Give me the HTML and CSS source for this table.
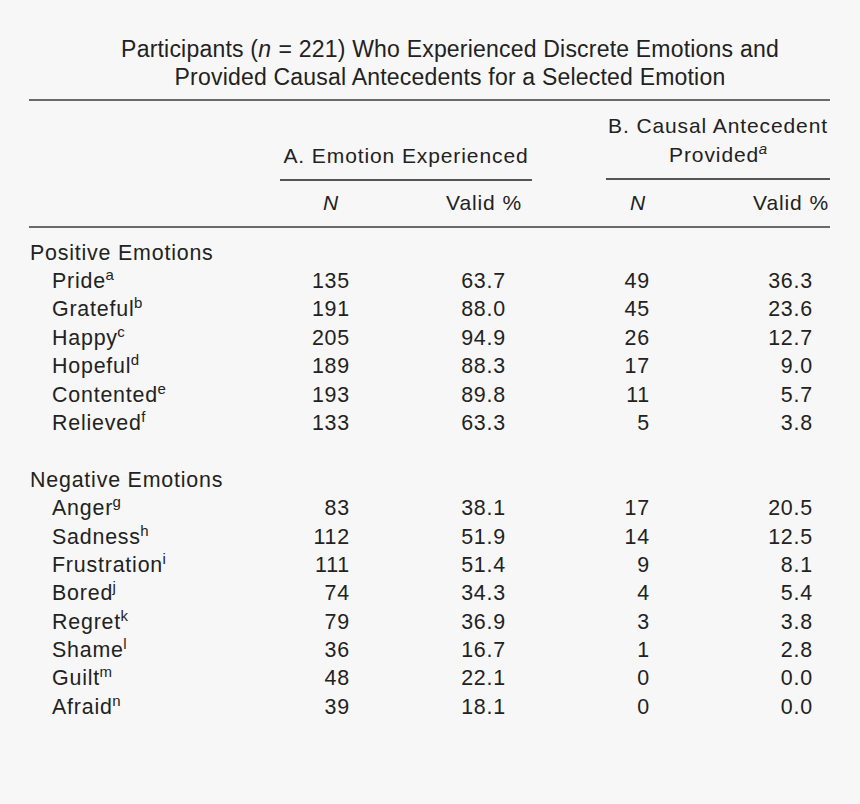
FILE: index.html
```html
<!DOCTYPE html>
<html lang="en">
<head>
<meta charset="utf-8">
<title>Participants Who Experienced Discrete Emotions</title>
<link rel="stylesheet" href="styles.css">
</head>
<body>
<div class="page">
  <h1 class="title">Participants (<i>n</i> = 221) Who Experienced Discrete Emotions and<br>Provided Causal Antecedents for a Selected Emotion</h1>
  <div class="table">
    <div class="thead">
      <div class="grp grp-a">A. Emotion Experienced</div>
      <div class="grp grp-b">B. Causal Antecedent<br>Provided<sup class="it">a</sup></div>
    </div>
    <div class="row colhead">
      <div class="lab"></div>
      <div class="an"><i>N</i></div>
      <div class="av">Valid %</div>
      <div class="sp"></div>
      <div class="bn"><i>N</i></div>
      <div class="bv">Valid %</div>
    </div>
    <div class="tbody">
      <div class="row"><div class="lab sec">Positive Emotions</div></div>
      <div class="row"><div class="lab">Pride<sup>a</sup></div><div class="an">135</div><div class="av">63.7</div><div class="sp"></div><div class="bn">49</div><div class="bv">36.3</div></div>
      <div class="row"><div class="lab">Grateful<sup>b</sup></div><div class="an">191</div><div class="av">88.0</div><div class="sp"></div><div class="bn">45</div><div class="bv">23.6</div></div>
      <div class="row"><div class="lab">Happy<sup>c</sup></div><div class="an">205</div><div class="av">94.9</div><div class="sp"></div><div class="bn">26</div><div class="bv">12.7</div></div>
      <div class="row"><div class="lab">Hopeful<sup>d</sup></div><div class="an">189</div><div class="av">88.3</div><div class="sp"></div><div class="bn">17</div><div class="bv">9.0</div></div>
      <div class="row"><div class="lab">Contented<sup>e</sup></div><div class="an">193</div><div class="av">89.8</div><div class="sp"></div><div class="bn">11</div><div class="bv">5.7</div></div>
      <div class="row"><div class="lab">Relieved<sup>f</sup></div><div class="an">133</div><div class="av">63.3</div><div class="sp"></div><div class="bn">5</div><div class="bv">3.8</div></div>
      <div class="row blank"></div>
      <div class="row"><div class="lab sec">Negative Emotions</div></div>
      <div class="row"><div class="lab">Anger<sup>g</sup></div><div class="an">83</div><div class="av">38.1</div><div class="sp"></div><div class="bn">17</div><div class="bv">20.5</div></div>
      <div class="row"><div class="lab">Sadness<sup>h</sup></div><div class="an">112</div><div class="av">51.9</div><div class="sp"></div><div class="bn">14</div><div class="bv">12.5</div></div>
      <div class="row"><div class="lab">Frustration<sup>i</sup></div><div class="an">111</div><div class="av">51.4</div><div class="sp"></div><div class="bn">9</div><div class="bv">8.1</div></div>
      <div class="row"><div class="lab">Bored<sup>j</sup></div><div class="an">74</div><div class="av">34.3</div><div class="sp"></div><div class="bn">4</div><div class="bv">5.4</div></div>
      <div class="row"><div class="lab">Regret<sup>k</sup></div><div class="an">79</div><div class="av">36.9</div><div class="sp"></div><div class="bn">3</div><div class="bv">3.8</div></div>
      <div class="row"><div class="lab">Shame<sup>l</sup></div><div class="an">36</div><div class="av">16.7</div><div class="sp"></div><div class="bn">1</div><div class="bv">2.8</div></div>
      <div class="row"><div class="lab">Guilt<sup>m</sup></div><div class="an">48</div><div class="av">22.1</div><div class="sp"></div><div class="bn">0</div><div class="bv">0.0</div></div>
      <div class="row"><div class="lab">Afraid<sup>n</sup></div><div class="an">39</div><div class="av">18.1</div><div class="sp"></div><div class="bn">0</div><div class="bv">0.0</div></div>
    </div>
  </div>
</div>
</body>
</html>
```

FILE: styles.css
```css
html, body {
  margin: 0;
  padding: 0;
  background: #f7f7f7;
}

body {
  width: 860px;
  height: 804px;
  overflow: hidden;
  font-family: "Liberation Sans", Arial, sans-serif;
  color: #222222;
}

.page {
  padding-top: 35px;
}

.title {
  margin: 0;
  padding-left: 40px;
  font-size: 23px;
  font-weight: normal;
  line-height: 28.2px;
  letter-spacing: 0.2px;
  text-align: center;
}

.title i {
  letter-spacing: 1px;
}

.table {
  margin: 8px 0 0 29px;
  width: 801px;
  border-top: 2px solid #6a6a6a;
}

.thead,
.row {
  display: grid;
  grid-template-columns: 251px 92px 160px 74px 94px 130px;
}

.thead {
  padding-top: 11px;
  font-size: 21px;
  line-height: 28.4px;
  letter-spacing: 0.9px;
}

.grp {
  text-align: center;
  padding-bottom: 9px;
  border-bottom: 2px solid #555;
}

.grp-a {
  grid-column: 2 / 4;
  align-self: end;
}

.grp-b {
  grid-column: 5 / 7;
  margin-bottom: 1px;
}

.row {
  font-size: 21.4px;
  line-height: 28.4px;
  letter-spacing: 0.8px;
  height: 28.4px;
}

.colhead {
  font-size: 21px;
  letter-spacing: 0.9px;
  padding-top: 8px;
  padding-bottom: 8px;
  border-bottom: 2px solid #6a6a6a;
}

.colhead .an { padding-right: 33px; }
.colhead .av { padding-right: 10px; }
.colhead .bn { padding-right: 54px; }
.colhead .bv { padding-right: 1px; }

.tbody {
  padding-top: 11px;
}

.lab {
  padding-left: 23px;
  white-space: nowrap;
}

.lab.sec {
  padding-left: 1px;
}

.an, .av, .bn, .bv {
  text-align: right;
}

.an { padding-right: 22px; }
.av { padding-right: 26px; }
.bn { padding-right: 50px; }
.bv { padding-right: 17px; }

sup {
  font-size: 15px;
  line-height: 0;
  vertical-align: 8px;
  letter-spacing: 0;
  margin-left: -0.5px;
}

sup.it {
  font-style: italic;
}
```
